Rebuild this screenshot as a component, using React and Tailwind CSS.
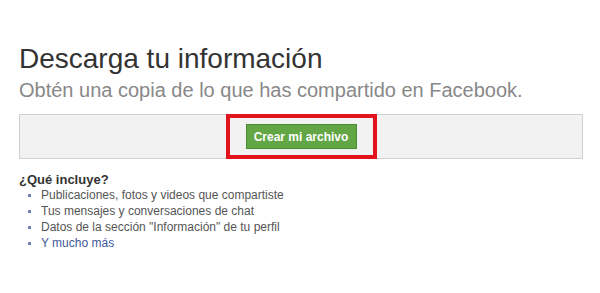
export default function App() {
  const items = [
    "Publicaciones, fotos y videos que compartiste",
    "Tus mensajes y conversaciones de chat",
    'Datos de la sección "Información" de tu perfil',
  ];

  return (
    <div className="h-[293px] w-[600px] bg-white font-['Liberation_Sans',Arial,sans-serif]">
      <div className="pl-[19px] pr-[17px] pt-[43px]">
        <h1 className="text-[28px] leading-[32px] text-[#333]">Descarga tu información</h1>
        <p className="mt-[3px] text-[20px] leading-[24px] text-[#888]">
          Obtén una copia de lo que has compartido en Facebook.
        </p>

        <div className="mt-[12px] flex h-[45px] items-center justify-center border border-[#d0d0d0] bg-[#f2f2f2]">
          <div className="-my-px border-4 border-[#e3131b] px-4 py-[6px]">
            <button className="h-[25px] w-[111px] border border-[#4c8a34] bg-[#62a646] text-[12px] font-bold text-white">
              Crear mi archivo
            </button>
          </div>
        </div>

        <h2 className="mt-[13px] text-[13px] font-bold leading-[16px] text-[#333]">¿Qué incluye?</h2>
        <ul className="-mt-px pl-[9px]">
          {items.map((item) => (
            <li key={item} className="flex items-center text-[12px] leading-[16px] text-[#555]">
              <span className="mr-[10px] h-[3px] w-[3px] shrink-0 bg-[#6d84b4]" />
              {item}
            </li>
          ))}
          <li className="flex items-center text-[12px] leading-[16px] text-[#3b5998]">
            <span className="mr-[10px] h-[3px] w-[3px] shrink-0 bg-[#6d84b4]" />
            Y mucho más
          </li>
        </ul>
      </div>
    </div>
  );
}
